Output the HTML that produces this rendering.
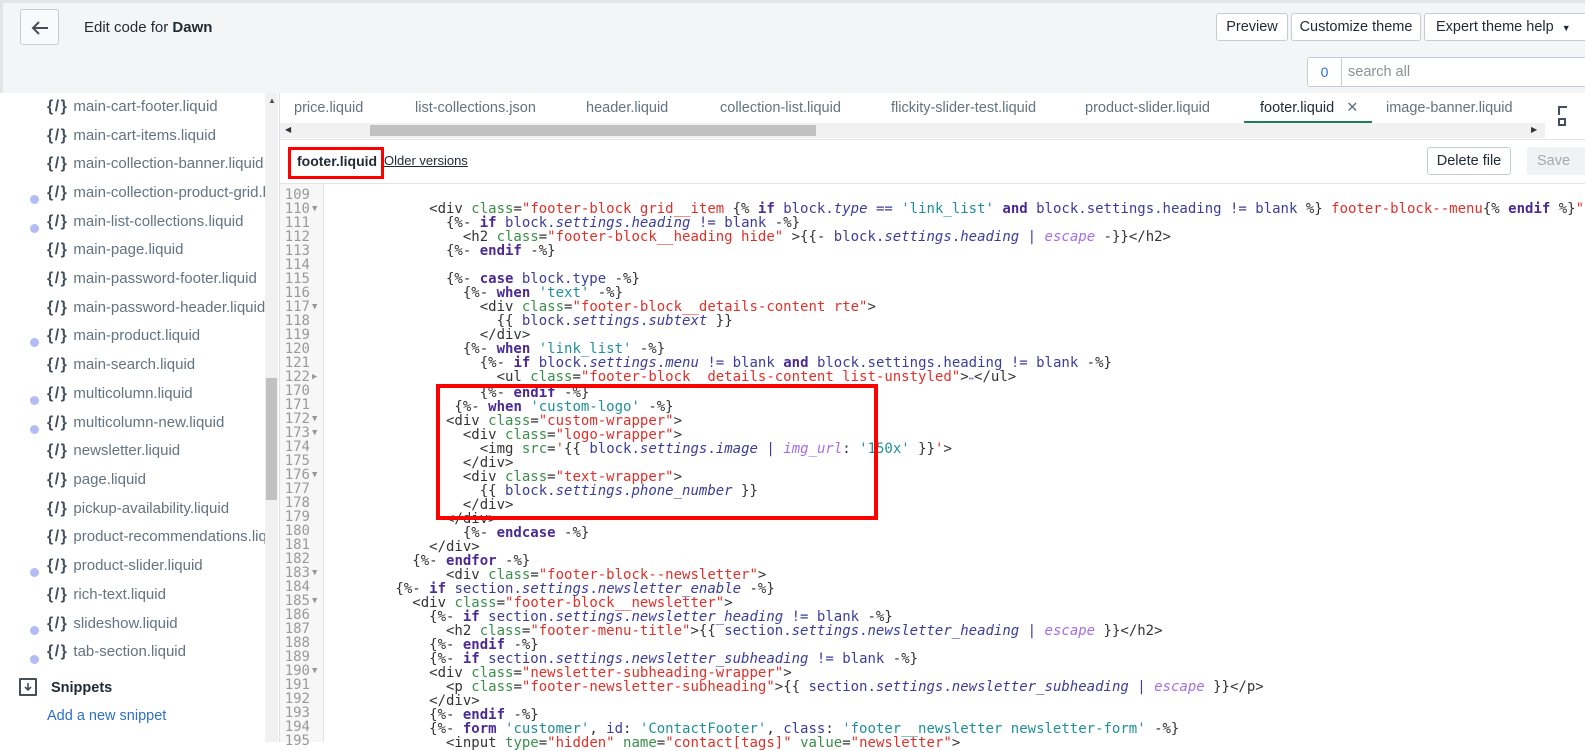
<!DOCTYPE html>
<html><head><meta charset="utf-8"><style>
*{margin:0;padding:0;box-sizing:border-box}
body{width:1585px;height:742px;overflow:hidden;background:#fff;font-family:"Liberation Sans",sans-serif;position:relative;color:#212b36}
.hdr{position:absolute;left:0;top:0;width:1585px;height:93px;background:#f4f5f7;border-top:3px solid #e3e4e6;border-left:3px solid #e3e4e6}
.btn{position:absolute;background:#fff;border:1px solid #c4cdd5;border-radius:3px;font-size:14.5px;color:#212b36;height:28px;line-height:26px;text-align:center;white-space:nowrap}
.side{position:absolute;left:3px;top:96px;width:262px;height:646px;background:#fff;overflow:hidden}
.it{position:absolute;left:44px;font-size:15px;color:#637381;white-space:nowrap}
.it b{font-weight:bold;color:#454f5b;font-size:16px;margin-right:5px;letter-spacing:1.5px}
.dot{position:absolute;left:27px;width:9px;height:9px;border-radius:50%;background:#b3bcf5}
.sb{position:absolute;left:265px;top:93px;width:13px;height:649px;background:#f1f1f1}
.main{position:absolute;left:279px;top:93px;width:1306px;height:649px;border-left:1px solid #dfe3e8}
.tab{position:absolute;top:7px;font-size:14.5px;color:#637381;white-space:nowrap}
.gut{position:absolute;left:280px;top:184px;width:44px;height:558px;background:#f7f7f7;border-right:1px solid #e4e4e4}
pre{position:absolute;font-family:"DejaVu Sans Mono",monospace;font-size:14px;line-height:14px}
.num{left:280px;top:188px;width:30px;text-align:right;color:#999}
.arr{left:312px;top:188px;color:#999;font-size:9px}
.code{left:328px;top:188px;color:#333}
.a{color:#3a8f4a}.s{color:#e0302a}.k{color:#4a2a96;font-weight:bold}.l{color:#3c3c9c}.i{color:#3c3c9c;font-style:italic}.f{color:#a56ee6;font-style:italic}.q{color:#1f8f9a}
.rb{position:absolute;border:4px solid #f00}
</style></head><body>
<div class="hdr">
 <div style="position:absolute;left:17px;top:6px;width:39px;height:36px;border:1px solid #c4cdd5;border-radius:3px;background:#f9fafb"><svg width="39" height="36" viewBox="0 0 39 36"><path d="M12 18h15M18 12l-6 6 6 6" stroke="#454f5b" stroke-width="2" fill="none"/></svg></div>
 <div style="position:absolute;left:81px;top:16px;font-size:15px;color:#212b36">Edit code for <b>Dawn</b></div>
 <div class="btn" style="left:1213px;top:10px;width:72px">Preview</div>
 <div class="btn" style="left:1288px;top:10px;width:130px">Customize theme</div>
 <div class="btn" style="left:1421px;top:10px;width:170px;text-align:left;padding-left:11px">Expert theme help <span style="font-size:9px;margin-left:4px">▼</span></div>
 <div style="position:absolute;left:1304px;top:54px;width:290px;height:30px;border:1px solid #c4cdd5;border-radius:3px;background:#fff">
  <div style="position:absolute;left:0;top:0;width:34px;height:28px;border-right:1px solid #c4cdd5;text-align:center;line-height:28px;color:#2c6ecb;font-size:14px">0</div>
  <div style="position:absolute;left:40px;top:6px;color:#8c9196;font-size:14.5px">search all</div>
 </div>
</div>
<div class="side">
 <div class="it" style="top:2px"><b>{/}</b>main-cart-footer.liquid</div>
 <div class="it" style="top:31px"><b>{/}</b>main-cart-items.liquid</div>
 <div class="it" style="top:59px"><b>{/}</b>main-collection-banner.liquid</div>
 <div class="dot" style="top:99px"></div><div class="it" style="top:88px"><b>{/}</b>main-collection-product-grid.liquid</div>
 <div class="dot" style="top:128px"></div><div class="it" style="top:117px"><b>{/}</b>main-list-collections.liquid</div>
 <div class="it" style="top:145px"><b>{/}</b>main-page.liquid</div>
 <div class="it" style="top:174px"><b>{/}</b>main-password-footer.liquid</div>
 <div class="it" style="top:203px"><b>{/}</b>main-password-header.liquid</div>
 <div class="dot" style="top:242px"></div><div class="it" style="top:231px"><b>{/}</b>main-product.liquid</div>
 <div class="it" style="top:260px"><b>{/}</b>main-search.liquid</div>
 <div class="dot" style="top:300px"></div><div class="it" style="top:289px"><b>{/}</b>multicolumn.liquid</div>
 <div class="dot" style="top:329px"></div><div class="it" style="top:318px"><b>{/}</b>multicolumn-new.liquid</div>
 <div class="it" style="top:346px"><b>{/}</b>newsletter.liquid</div>
 <div class="it" style="top:375px"><b>{/}</b>page.liquid</div>
 <div class="it" style="top:404px"><b>{/}</b>pickup-availability.liquid</div>
 <div class="it" style="top:432px"><b>{/}</b>product-recommendations.liquid</div>
 <div class="dot" style="top:472px"></div><div class="it" style="top:461px"><b>{/}</b>product-slider.liquid</div>
 <div class="it" style="top:490px"><b>{/}</b>rich-text.liquid</div>
 <div class="dot" style="top:530px"></div><div class="it" style="top:519px"><b>{/}</b>slideshow.liquid</div>
 <div class="dot" style="top:559px"></div><div class="it" style="top:547px"><b>{/}</b>tab-section.liquid</div>
 <div style="position:absolute;left:16px;top:582px;width:18px;height:18px;border:2px solid #454f5b;border-radius:1px"><svg width="14" height="14" viewBox="0 0 14 14"><path d="M7 3v7M4 7l3 3 3-3" stroke="#454f5b" stroke-width="1.6" fill="none"/></svg></div>
 <div style="position:absolute;left:48px;top:584px;font-size:14.5px;font-weight:bold;color:#212b36">Snippets</div>
 <div style="position:absolute;left:44px;top:612px;font-size:14.5px;color:#2c6ecb">Add a new snippet</div>
</div>
<div class="sb"><div style="position:absolute;left:3px;top:3px;font-size:8px;color:#505050">▲</div><div style="position:absolute;left:1px;top:285px;width:11px;height:122px;background:#c1c1c1"></div></div>
<div class="main">
 <div class="tab" style="left:14px">price.liquid</div>
 <div class="tab" style="left:135px">list-collections.json</div>
 <div class="tab" style="left:306px">header.liquid</div>
 <div class="tab" style="left:440px">collection-list.liquid</div>
 <div class="tab" style="left:611px">flickity-slider-test.liquid</div>
 <div class="tab" style="left:805px">product-slider.liquid</div>
 <div class="tab" style="left:980px;color:#212b36">footer.liquid <span style="margin-left:8px;color:#637381">✕</span></div>
 <div style="position:absolute;left:964px;top:28px;width:128px;height:2px;background:#207a5e"></div>
 <div class="tab" style="left:1106px">image-banner.liquid</div>
 <div style="position:absolute;left:1278px;top:13px;width:9px;height:9px;border:2px solid #454f5b;border-right:none;border-bottom:none"></div>
 <div style="position:absolute;left:1278px;top:25px;width:8px;height:8px;border:2px solid #454f5b"></div>
 <div style="position:absolute;left:0;top:30px;width:1265px;height:15px;background:#f1f1f1"><div style="position:absolute;left:90px;top:2px;width:446px;height:11px;background:#c1c1c1"></div><span style="position:absolute;left:5px;top:2px;font-size:8px;color:#333">◀</span><span style="position:absolute;left:1251px;top:2px;font-size:8px;color:#333">▶</span></div>
 <div style="position:absolute;left:0;top:46px;width:1306px;height:1px;background:#dfe3e8"></div>
 <div style="position:absolute;left:17px;top:60px;font-size:14px;font-weight:bold;color:#212b36">footer.liquid</div>
 <div style="position:absolute;left:104px;top:60px;font-size:13px;color:#212b36;text-decoration:underline">Older versions</div>
 <div class="btn" style="left:1147px;top:54px;height:28px;width:84px">Delete file</div>
 <div style="position:absolute;left:1247px;top:54px;width:70px;height:28px;background:#f1f2f3;border-radius:3px;color:#a5a9ad;font-size:14.5px;line-height:28px;padding-left:10px">Save</div>
 <div style="position:absolute;left:0;top:90px;width:1306px;height:1px;background:#e4e4e4"></div>
</div>
<div class="gut"></div>
<pre class="num">109
110
111
112
113
114
115
116
117
118
119
120
121
122
170
171
172
173
174
175
176
177
178
179
180
181
182
183
184
185
186
187
188
189
190
191
192
193
194
195</pre>
<pre class="arr"> 
▼
 
 
 
 
 
 
▼
 
 
 
 
▶
 
 
▼
▼
 
 
▼
 
 
 
 
 
 
▼
 
▼
 
 
 
 
▼</pre>
<pre class="code"> 
            &lt;div <span class="a">class</span>=<span class="s">"footer-block grid__item </span>{% <span class="k">if</span> <span class="l">block.</span><span class="i">type</span> <span class="l">==</span> <span class="q">'link_list'</span> <span class="k">and</span> <span class="l">block.settings.heading != blank</span> %}<span class="s"> footer-block--menu</span>{% <span class="k">endif</span> %}<span class="s">"</span>
              {%- <span class="k">if</span> <span class="l">block.</span><span class="i">settings</span><span class="l">.</span><span class="i">heading</span> <span class="l">!= blank</span> -%}
                &lt;h2 <span class="a">class</span>=<span class="s">"footer-block__heading hide"</span> &gt;{{- <span class="l">block.</span><span class="i">settings</span><span class="l">.</span><span class="i">heading</span> <span class="l">|</span> <span class="f">escape</span> -}}&lt;/h2&gt;
              {%- <span class="k">endif</span> -%}
 
              {%- <span class="k">case</span> <span class="l">block.type</span> -%}
                {%- <span class="k">when</span> <span class="q">'text'</span> -%}
                  &lt;div <span class="a">class</span>=<span class="s">"footer-block__details-content rte"</span>&gt;
                    {{ <span class="l">block.</span><span class="i">settings</span><span class="l">.</span><span class="i">subtext</span> }}
                  &lt;/div&gt;
                {%- <span class="k">when</span> <span class="q">'link_list'</span> -%}
                  {%- <span class="k">if</span> <span class="l">block.</span><span class="i">settings</span><span class="l">.</span><span class="i">menu</span> <span class="l">!= blank</span> <span class="k">and</span> <span class="l">block.settings.heading != blank</span> -%}
                    &lt;ul <span class="a">class</span>=<span class="s">"footer-block__details-content list-unstyled"</span>&gt;<span style="color:#6a6aff;font-size:9px">↔</span>&lt;/ul&gt;
                  {%- <span class="k">endif</span> -%}
               {%- <span class="k">when</span> <span class="q">'custom-logo'</span> -%}
              &lt;div <span class="a">class</span>=<span class="s">"custom-wrapper"</span>&gt;
                &lt;div <span class="a">class</span>=<span class="s">"logo-wrapper"</span>&gt;
                  &lt;img <span class="a">src</span>=<span class="s">'</span>{{ <span class="l">block.</span><span class="i">settings</span><span class="l">.</span><span class="i">image</span> <span class="l">|</span> <span class="f">img_url</span>: <span class="q">'150x'</span> }}<span class="s">'</span>&gt;
                &lt;/div&gt;
                &lt;div <span class="a">class</span>=<span class="s">"text-wrapper"</span>&gt;
                  {{ <span class="l">block.</span><span class="i">settings</span><span class="l">.</span><span class="i">phone_number</span> }}
                &lt;/div&gt;
              &lt;/div&gt;
                {%- <span class="k">endcase</span> -%}
            &lt;/div&gt;
          {%- <span class="k">endfor</span> -%}
              &lt;div <span class="a">class</span>=<span class="s">"footer-block--newsletter"</span>&gt;
        {%- <span class="k">if</span> <span class="l">section.</span><span class="i">settings</span><span class="l">.</span><span class="i">newsletter_enable</span> -%}
          &lt;div <span class="a">class</span>=<span class="s">"footer-block__newsletter"</span>&gt;
            {%- <span class="k">if</span> <span class="l">section.</span><span class="i">settings</span><span class="l">.</span><span class="i">newsletter_heading</span> <span class="l">!= blank</span> -%}
              &lt;h2 <span class="a">class</span>=<span class="s">"footer-menu-title"</span>&gt;{{ <span class="l">section.</span><span class="i">settings</span><span class="l">.</span><span class="i">newsletter_heading</span> <span class="l">|</span> <span class="f">escape</span> }}&lt;/h2&gt;
            {%- <span class="k">endif</span> -%}
            {%- <span class="k">if</span> <span class="l">section.</span><span class="i">settings</span><span class="l">.</span><span class="i">newsletter_subheading</span> <span class="l">!= blank</span> -%}
            &lt;div <span class="a">class</span>=<span class="s">"newsletter-subheading-wrapper"</span>&gt;
              &lt;p <span class="a">class</span>=<span class="s">"footer-newsletter-subheading"</span>&gt;{{ <span class="l">section.</span><span class="i">settings</span><span class="l">.</span><span class="i">newsletter_subheading</span> <span class="l">|</span> <span class="f">escape</span> }}&lt;/p&gt;
            &lt;/div&gt;
            {%- <span class="k">endif</span> -%}
            {%- <span class="k">form</span> <span class="q">'customer'</span>, <span class="l">id</span>: <span class="q">'ContactFooter'</span>, <span class="l">class</span>: <span class="q">'footer__newsletter newsletter-form'</span> -%}
              &lt;input <span class="a">type</span>=<span class="s">"hidden"</span> <span class="a">name</span>=<span class="s">"contact[tags]"</span> <span class="a">value</span>=<span class="s">"newsletter"</span>&gt;</pre>
<div class="rb" style="left:288px;top:147px;width:96px;height:32px;border-width:3px"></div>
<div class="rb" style="left:436px;top:384px;width:442px;height:136px"></div>
</body></html>
